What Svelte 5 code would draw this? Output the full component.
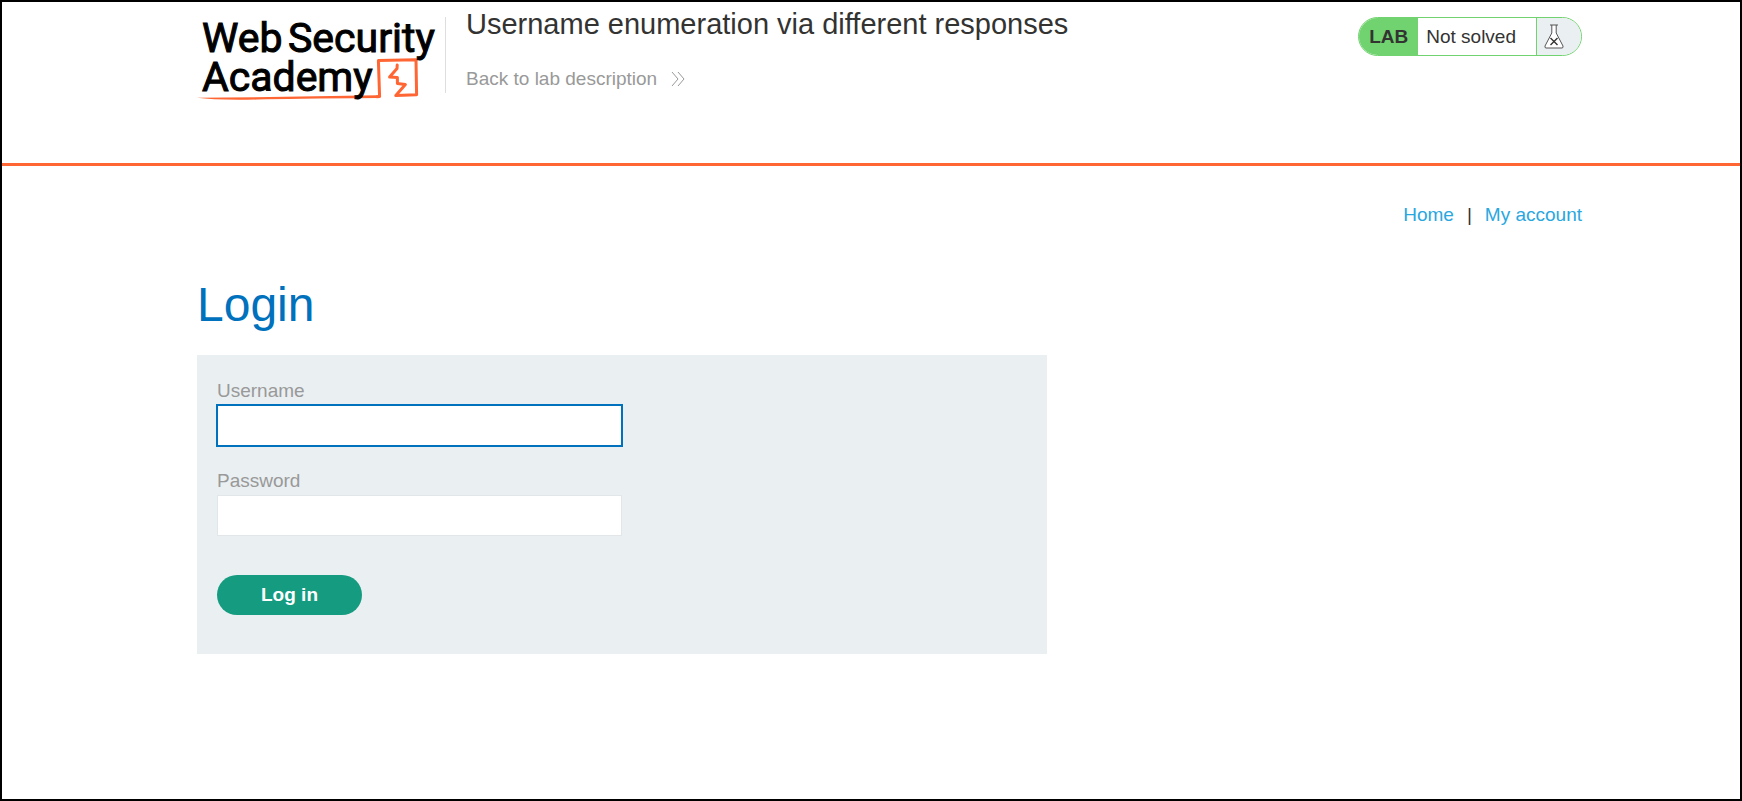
<script lang="ts">
  let username = $state("");
  let password = $state("");
  let activeField = $state("username");
</script>

<div class="page">
  <header class="lab-header">
    <div class="container header-row">
      <a class="logo" href="#academy" aria-label="Web Security Academy">
        <svg width="245" height="86" viewBox="0 0 245 86">
          <path class="underline" d="M0 80.8 Q90 80 181 78.2 V81 Q90 81.6 60 82.6 Q18 83.4 0 80.8 Z" />
          <path class="mark" d="M180 79.8 L182.6 79.5 L181.4 43.6 L219 42.8 L219.6 77.8 L198.8 78.6 L208.4 67.6 L200.4 66.6 L200.4 60.6 L192.6 60 L200 51.6 L200.2 48" />
          <g class="wordmark">
            <text x="5" y="35">Web</text>
            <text x="91" y="35">Security</text>
            <text x="5" y="74">Academy</text>
          </g>
        </svg>
      </a>

      <div class="title-block">
        <h2>Username enumeration via different responses</h2>
        <a class="back-link" href="#description">
          Back to lab description
          <svg width="14" height="16" viewBox="0 0 14 16">
            <path d="M1 1 L7 8 L1 15 M7 1 L13 8 L7 15" />
          </svg>
        </a>
      </div>

      <div class="lab-status">
        <span class="lab-tag">LAB</span>
        <span class="lab-text">Not solved</span>
        <span class="lab-icon">
          <svg width="20" height="25" viewBox="0 0 20 25">
            <path class="glass" d="M6 1 H14 M7.8 1 V9 L1 22 Q.6 24 2 24 H18 Q19.4 24 19 22 L12.2 9 V1" />
            <path class="cross" d="M6.5 14 L13.5 21 M13.5 14 L6.5 21" />
          </svg>
        </span>
      </div>
    </div>
  </header>

  <main class="container">
    <nav class="top-links">
      <a href="#home">Home</a>
      <span>|</span>
      <a href="#account">My account</a>
    </nav>

    <h1>Login</h1>

    <form class="login-form" onsubmit={(e) => e.preventDefault()}>
      <label for="username">Username</label>
      <input
        id="username"
        type="text"
        class:active={activeField === "username"}
        bind:value={username}
        onfocus={() => (activeField = "username")}
      />
      <label for="password">Password</label>
      <input
        id="password"
        type="password"
        class:active={activeField === "password"}
        bind:value={password}
        onfocus={() => (activeField = "password")}
      />
      <button type="submit">Log in</button>
    </form>
  </main>
</div>

<style>
  :global(body) {
    margin: 0;
    background: #fff;
  }

  .page {
    box-sizing: border-box;
    min-height: 100vh;
    border: 2px solid #000;
    font-family: "Liberation Sans", Arial, sans-serif;
    font-size: 19px;
    line-height: 22px;
    color: #333332;
  }

  a {
    text-decoration: none;
  }

  .container {
    padding: 0 158px 0 195px;
  }

  .lab-header {
    padding: 5px 0 60px;
    border-bottom: 3px solid #ff6633;
  }

  .header-row {
    display: flex;
  }

  .logo {
    display: flex;
    padding-top: 10px;
  }

  .underline {
    fill: #ff6633;
  }

  .mark {
    fill: none;
    stroke: #ff6633;
    stroke-width: 3;
    stroke-linejoin: round;
    stroke-linecap: round;
  }

  .wordmark {
    font-family: Roboto, "Liberation Sans", sans-serif;
    font-size: 41px;
    fill: #000;
    stroke: #000;
    stroke-width: 1;
  }

  .title-block {
    flex: 1;
    display: flex;
    flex-direction: column;
    align-items: flex-start;
    gap: 27px;
    padding-left: 24px;
    background: linear-gradient(#dedede, #dedede) 3px 10px / 1px 76px no-repeat;
  }

  h2 {
    margin: 0;
    font-size: 29px;
    line-height: 34px;
    font-weight: 400;
  }

  .back-link {
    display: flex;
    align-items: center;
    gap: 14px;
    color: #999;
  }

  .back-link svg {
    fill: none;
    stroke: #999;
  }

  .lab-status {
    box-sizing: border-box;
    display: flex;
    height: 39px;
    margin-top: 10px;
    overflow: hidden;
    border: 1px solid #70d36f;
    border-radius: 20px;
    line-height: 37px;
  }

  .lab-tag {
    padding: 0 10px;
    background: #70d36f;
    font-weight: 700;
  }

  .lab-text {
    padding: 0 20px 0 8px;
    border-right: 1px solid #70d36f;
  }

  .lab-icon {
    display: flex;
    align-items: center;
    padding: 0 17px 0 7px;
    background: #eaeff2;
  }

  .glass {
    fill: #fff;
    stroke: #555;
  }

  .cross {
    fill: none;
    stroke: #333332;
    stroke-width: 1.4;
  }

  .top-links {
    display: flex;
    justify-content: flex-end;
    gap: 13px;
    padding-top: 38px;
  }

  .top-links a {
    color: #29a7df;
  }

  h1 {
    margin: 53px 0 24px;
    font-size: 48px;
    line-height: 52px;
    font-weight: 400;
    color: #0071bc;
  }

  .login-form {
    box-sizing: border-box;
    display: flex;
    flex-direction: column;
    align-items: flex-start;
    max-width: 850px;
    padding: 25px 20px 39px;
    background: #eaeff2;
  }

  label {
    color: #999;
  }

  input {
    box-sizing: border-box;
    width: 50%;
    height: 41px;
    margin: 3px 0 24px;
    padding: 0 10px;
    border: 1px solid #e3e6e8;
    font: inherit;
    color: inherit;
    background: #fff;
    outline: none;
  }

  input.active {
    border-color: #0071bc;
    box-shadow: 0 0 0 1px #0071bc;
  }

  button {
    height: 40px;
    margin-top: 15px;
    padding: 0 44px;
    border: 0;
    border-radius: 20px;
    background: #159b80;
    color: #fff;
    font: inherit;
    font-weight: 700;
    cursor: pointer;
  }
</style>
